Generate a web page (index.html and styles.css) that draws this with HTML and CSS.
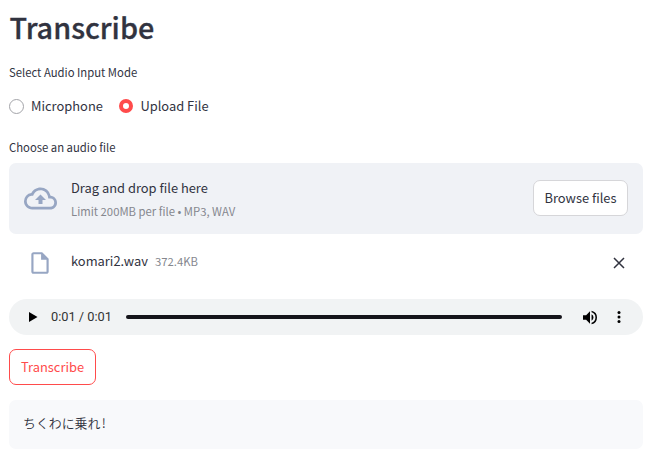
FILE: index.html
```html
<!DOCTYPE html>
<html lang="en">
<head>
<meta charset="utf-8">
<title>Transcribe</title>
<link rel="stylesheet" href="styles.css">
</head>
<body>
<main class="app">
  <h1 class="title"><span>Transcribe</span></h1>
  <div class="label mode-label"><span>Select Audio Input Mode</span></div>
  <div class="radios">
    <div class="radio"><i class="dot"></i><span>Microphone</span></div>
    <div class="radio"><i class="dot checked"></i><span>Upload File</span></div>
  </div>
  <div class="label file-label"><span>Choose an audio file</span></div>
  <section class="dropzone">
    <svg class="cloud" viewBox="0 0 24 24"><path d="M19.35 10.04A7.49 7.49 0 0 0 12 4C9.11 4 6.6 5.64 5.35 8.04A5.994 5.994 0 0 0 0 14c0 3.31 2.69 6 6 6h13c2.76 0 5-2.24 5-5 0-2.64-2.05-4.78-4.65-4.96zM19 18H6c-2.21 0-4-1.79-4-4 0-2.05 1.53-3.76 3.56-3.97l1.07-.11.5-.95A5.469 5.469 0 0 1 12 6c2.62 0 4.88 1.86 5.39 4.43l.3 1.5 1.53.11A2.98 2.98 0 0 1 22 15c0 1.65-1.35 3-3 3zM8 13h2.55v3h2.9v-3H16l-4-4z"/></svg>
    <div class="instructions">
      <div class="drag"><span>Drag and drop file here</span></div>
      <div class="limit"><span>Limit 200MB per file • MP3, WAV</span></div>
    </div>
    <button class="button browse"><span>Browse files</span></button>
  </section>
  <div class="file">
    <svg class="doc" viewBox="0 0 24 24"><path d="M14 2H6c-1.1 0-1.99.9-1.99 2L4 20c0 1.1.89 2 1.99 2H18c1.1 0 2-.9 2-2V8l-6-6zM6 20V4h7v5h5v11H6z"/></svg>
    <span class="name">komari2.wav</span>
    <span class="size">372.4KB</span>
    <svg class="close" viewBox="0 0 12 12"><path d="M1 1l10 10M11 1L1 11"/></svg>
  </div>
  <div class="player">
    <svg class="play" viewBox="0 0 9 10"><path d="M0 0v10l8.500-5z"/></svg>
    <span class="time">0:01 / 0:01</span>
    <div class="track"></div>
    <svg class="volume" viewBox="3 3 18 18"><path d="M3 9v6h4l5 5V4L7 9H3zm13.500 3A4.500 4.500 0 0 0 14 7.970v8.050A4.500 4.500 0 0 0 16.500 12zM14 3.230v2.060a7 7 0 0 1 0 13.420v2.060a9 9 0 0 0 0-17.540z"/></svg>
    <svg class="more" viewBox="0 0 4 14"><circle cx="2" cy="2.500" r="1.500"/><circle cx="2" cy="7" r="1.500"/><circle cx="2" cy="11.500" r="1.500"/></svg>
  </div>
  <button class="button primary"><span>Transcribe</span></button>
  <div class="result" lang="ja"><span>ちくわに乗れ<span class="mark">!</span></span></div>
</main>
</body>
</html>
```
FILE: styles.css
```css
* { box-sizing: border-box; }
body {
  margin: 0;
  background: #fff;
  color: #31333f;
  font: 12.9px/20px "Noto Sans CJK JP", "Noto Sans", sans-serif;
}
svg { display: block; flex: none; }
.app { width: 634px; margin-left: 9px; display: flex; flex-direction: column; }
.title {
  margin: 7px 0 0; font-size: 28.8px; line-height: 40px; font-weight: 500;
  -webkit-text-stroke: 0.3px #31333f; padding-left: 0.5px;
}
.label { font-size: 11.3px; line-height: 16px; }
.mode-label { margin-top: 17px; }
.radios { display: flex; gap: 16px; margin-top: 16px; }
.radio { display: flex; align-items: center; gap: 7px; }
.dot { width: 15px; height: 15px; border: 1px solid #a3a4a9; border-radius: 50%; }
.dot.checked { width: 14px; height: 14px; margin-right: 0.5px; border: 4px solid #ff4b4b; }
.file-label { margin-top: 23px; }
.dropzone {
  display: flex; align-items: center; height: 71px; margin-top: 8px;
  padding: 0 15px; border-radius: 7px; background: #f0f2f6;
}
.cloud { width: 33px; height: 33px; fill: #97a6c3; }
.instructions { flex: 1; margin-left: 14px; padding-top: 1px; }
.limit { margin-top: 3px; font-size: 11.3px; color: #85878e; }
.button {
  height: 36px; padding: 0 11px; border: 1px solid #d6d6d9; border-radius: 7px;
  background: #fff; color: inherit; font: inherit;
}
.browse { width: 95px; padding: 0; margin-top: -1px; }
.file { display: flex; align-items: center; height: 28px; margin-top: 13px; padding: 0 18px 0 18px; }
.doc { width: 26px; height: 26px; margin-top: 3px; fill: #97a6c3; }
.name { margin-left: 18px; }
.size { margin-left: 7px; font-size: 11.3px; color: #85878e; }
.close { width: 12px; height: 12px; margin: 4px 0 0 auto; stroke: #31333f; stroke-width: 1.500; fill: none; }
.player {
  display: flex; align-items: center; height: 36px; margin-top: 24px;
  padding: 0 22px 0 20px; border-radius: 18px; background: #f1f3f4;
}
.play { width: 9px; height: 10px; }
.time { width: 61px; margin-left: 13px; font: 12.800px/20px Roboto, sans-serif; white-space: nowrap; color: #333; }
.track { flex: 1; height: 4px; margin: 0 21px 0 14px; border-radius: 2px; background: #15141a; }
.volume { width: 14px; height: 15px; }
.more { width: 4px; height: 14px; margin-left: 20px; }
.primary { align-self: flex-start; margin-top: 14px; border-color: #ff4b4b; color: #ff4b4b; }
.result { height: 49px; margin-top: 15px; padding: 13px 14px; border-radius: 7px; background: #f8f9fb; font-weight: 350; }
.mark { margin-left: 1.5px; }
```
